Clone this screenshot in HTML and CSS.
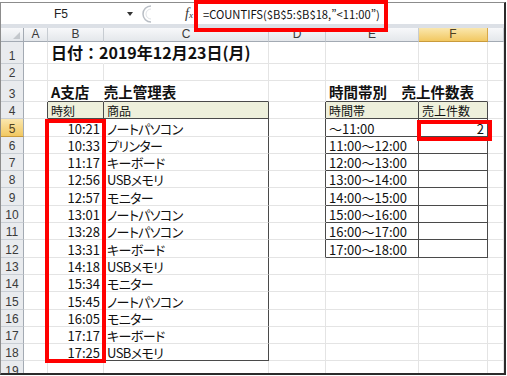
FILE: index.html
```html
<!DOCTYPE html>
<html lang="ja">
<head>
    <meta charset="UTF-8">
    <meta name="viewport" content="width=device-width, initial-scale=1.0">
    <title>A支店 売上管理表</title>
    <link rel="stylesheet" href="styles.css">
</head>
<body>
    <div class="window">
        <!-- Formula bar -->
        <div class="formula-bar">
            <div class="name-box">
                <span class="cell-ref">F5</span>
                <span class="drop"></span>
            </div>
            <svg class="grip" width="10" height="18" viewBox="0 0 10 18">
                <path d="M9 1 A8 8 0 0 0 9 17" fill="none" stroke="#b9bec5" stroke-width="1.5"/>
                <path d="M9 4 A5 5 0 0 0 9 14" fill="none" stroke="#dfe2e6" stroke-width="1"/>
            </svg>
            <span class="fx"><i>f</i><span class="fx-x">x</span></span>
            <div class="formula">=COUNTIFS($B$5:$B$18,”&lt;11:00”)</div>
        </div>

        <!-- Sheet -->
        <table class="sheet">
            <colgroup>
                <col class="c-rh"><col class="c-a"><col class="c-b"><col class="c-c">
                <col class="c-d"><col class="c-e"><col class="c-f"><col class="c-g">
            </colgroup>
            <tr class="r-head">
                <th class="corner"><span class="corner-tri"></span></th>
                <th class="ch">A</th><th class="ch">B</th><th class="ch">C</th>
                <th class="ch">D</th><th class="ch">E</th><th class="ch sel">F</th><th class="ch"></th>
            </tr>
            <tr class="r-title">
                <th class="rh">1</th><td></td>
                <td class="nr title">日付：2019年12月23日(月)</td>
                <td></td><td></td><td></td><td></td><td></td>
            </tr>
            <tr class="r-2">
                <th class="rh">2</th><td></td><td></td><td></td><td></td><td></td><td></td><td></td>
            </tr>
            <tr class="r-3">
                <th class="rh">3</th><td></td>
                <td class="nr bb caption">A支店　売上管理表</td>
                <td class="bb"></td><td></td>
                <td class="nr bb caption">時間帯別　売上件数表</td>
                <td class="bb"></td><td></td>
            </tr>
            <tr class="r-row">
                <th class="rh">4</th><td class="br"></td>
                <td class="head br bb">時刻</td><td class="head br bb">商品</td>
                <td class="br"></td>
                <td class="head br bb">時間帯</td><td class="head br bb">売上件数</td><td></td>
            </tr>
            <tr class="r-row">
                <th class="rh sel">5</th><td class="br"></td>
                <td class="num">10:21</td><td class="item br">ノートパソコン</td><td class="br"></td>
                <td class="br bb">～11:00</td><td class="num br bb">2</td><td></td>
            </tr>
            <tr class="r-row">
                <th class="rh">6</th><td class="br"></td>
                <td class="num">10:33</td><td class="item br">プリンター</td><td class="br"></td>
                <td class="br bb">11:00～12:00</td><td class="br bb"></td><td></td>
            </tr>
            <tr class="r-row">
                <th class="rh">7</th><td class="br"></td>
                <td class="num">11:17</td><td class="item br">キーボード</td><td class="br"></td>
                <td class="br bb">12:00～13:00</td><td class="br bb"></td><td></td>
            </tr>
            <tr class="r-row">
                <th class="rh">8</th><td class="br"></td>
                <td class="num">12:56</td><td class="item br">USBメモリ</td><td class="br"></td>
                <td class="br bb">13:00～14:00</td><td class="br bb"></td><td></td>
            </tr>
            <tr class="r-row">
                <th class="rh">9</th><td class="br"></td>
                <td class="num">12:57</td><td class="item br">モニター</td><td class="br"></td>
                <td class="br bb">14:00～15:00</td><td class="br bb"></td><td></td>
            </tr>
            <tr class="r-row">
                <th class="rh">10</th><td class="br"></td>
                <td class="num">13:01</td><td class="item br">ノートパソコン</td><td class="br"></td>
                <td class="br bb">15:00～16:00</td><td class="br bb"></td><td></td>
            </tr>
            <tr class="r-row">
                <th class="rh">11</th><td class="br"></td>
                <td class="num">13:28</td><td class="item br">ノートパソコン</td><td class="br"></td>
                <td class="br bb">16:00～17:00</td><td class="br bb"></td><td></td>
            </tr>
            <tr class="r-row">
                <th class="rh">12</th><td class="br"></td>
                <td class="num">13:31</td><td class="item br">キーボード</td><td class="br"></td>
                <td class="br bb">17:00～18:00</td><td class="br bb"></td><td></td>
            </tr>
            <tr class="r-row">
                <th class="rh">13</th><td class="br"></td>
                <td class="num">14:18</td><td class="item br">USBメモリ</td>
                <td></td><td></td><td></td><td></td>
            </tr>
            <tr class="r-row">
                <th class="rh">14</th><td class="br"></td>
                <td class="num">15:34</td><td class="item br">モニター</td>
                <td></td><td></td><td></td><td></td>
            </tr>
            <tr class="r-row">
                <th class="rh">15</th><td class="br"></td>
                <td class="num">15:45</td><td class="item br">ノートパソコン</td>
                <td></td><td></td><td></td><td></td>
            </tr>
            <tr class="r-row">
                <th class="rh">16</th><td class="br"></td>
                <td class="num">16:05</td><td class="item br">モニター</td>
                <td></td><td></td><td></td><td></td>
            </tr>
            <tr class="r-row">
                <th class="rh">17</th><td class="br"></td>
                <td class="num">17:17</td><td class="item br">キーボード</td>
                <td></td><td></td><td></td><td></td>
            </tr>
            <tr class="r-row">
                <th class="rh">18</th><td class="br"></td>
                <td class="num bb">17:25</td><td class="item br bb">USBメモリ</td>
                <td></td><td></td><td></td><td></td>
            </tr>
            <tr class="r-row">
                <th class="rh">19</th><td></td><td></td><td></td><td></td><td></td><td></td><td></td>
            </tr>
        </table>
    </div>

    <!-- Red highlight frames drawn over the sheet -->
    <div class="mark mark-formula"></div>
    <div class="mark mark-times"></div>
    <div class="mark mark-count"></div>
</body>
</html>
```

FILE: styles.css
```css
body {
    margin: 0;
    background-color: #fff;
    font-family: "Noto Sans CJK JP", "Liberation Sans", sans-serif;
    color: #111;
    position: relative;
    height: 376px;
    overflow: hidden;
}
.window {
    margin-top: 2px;
    width: 503px;
    height: 370px;
    border-left: 1px solid #8c8c8c;
    border-top: 1px solid #8c8c8c;
    border-right: 2px solid #2b2b2b;
    border-bottom: 2px solid #2b2b2b;
    overflow: hidden;
}

/* formula bar */
.formula-bar {
    display: flex;
    align-items: center;
    height: 21px;
    border-bottom: 4px solid #dce0e6;
    background-color: #fff;
}
.name-box {
    display: flex;
    align-items: center;
    width: 140px;
    flex: none;
}
.cell-ref {
    width: 120px;
    text-align: center;
    font-family: "Liberation Sans", sans-serif;
    font-size: 12px;
    color: #222;
}
.drop {
    margin-left: 6px;
    border-top: 4px solid #333;
    border-left: 3px solid transparent;
    border-right: 3px solid transparent;
}
.grip {
    flex: none;
    margin-left: 1px;
}
.fx {
    flex: none;
    margin-left: 33px;
    width: 18px;
    font-family: "Liberation Serif", serif;
    font-size: 14px;
    color: #333;
}
.fx-x {
    font-size: 9px;
    font-style: italic;
}
.formula {
    font-size: 11.2px;
    color: #111;
    white-space: nowrap;
}

/* sheet grid */
.sheet {
    border-collapse: separate;
    border-spacing: 0;
    table-layout: fixed;
    width: 503px;
}
.c-rh { width: 23px; }
.c-a { width: 24px; }
.c-b { width: 56px; }
.c-c { width: 165px; }
.c-d { width: 57px; }
.c-e { width: 93px; }
.c-f { width: 69px; }
.c-g { width: 16px; }

.r-head { height: 14px; }
.r-title { height: 22px; }
.r-2 { height: 17px; }
.r-3 { height: 21px; }
.r-row { height: 17.3px; }

.sheet td {
    padding: 0 3px;
    border-right: 1px solid #e4e4e4;
    border-bottom: 1px solid #e4e4e4;
    vertical-align: bottom;
    font-size: 13px;
    line-height: 15px;
    white-space: nowrap;
    overflow: visible;
}
.sheet th {
    padding: 0;
    font-family: "Liberation Sans", sans-serif;
    font-weight: normal;
    font-size: 12px;
    color: #3a3a3a;
}
.ch {
    text-align: center;
    line-height: 13px;
    background: linear-gradient(#f7f8fa, #e4e7eb);
    border-right: 1px solid #c7ccd2;
    border-bottom: 1px solid #a3aab3;
}
.ch.sel {
    background: linear-gradient(#fae7ae, #f2c861);
    border-right: 1px solid #d8a848;
    border-bottom: 1px solid #c99b3c;
    color: #4e4020;
}
.corner {
    position: relative;
    background: linear-gradient(#f7f8fa, #e4e7eb);
    border-right: 1px solid #a3aab3;
    border-bottom: 1px solid #a3aab3;
}
.corner-tri {
    position: absolute;
    right: 3px;
    bottom: 2px;
    border-bottom: 7px solid #c3c7cc;
    border-left: 7px solid transparent;
}
.rh {
    text-align: center;
    vertical-align: bottom;
    line-height: 14px;
    background-color: #e9ebee;
    border-right: 1px solid #a3aab3;
    border-bottom: 1px solid #c9ced4;
}
.rh.sel {
    background: linear-gradient(#fae7ae, #f2c861);
    border-bottom: 1px solid #c99b3c;
    color: #4e4020;
}

/* cell formats */
.sheet td.br { border-right-color: #4a4a4a; }
.sheet td.bb { border-bottom-color: #4a4a4a; }
.sheet td.nr { border-right-color: transparent; }
.sheet td.head {
    background-color: #eef0dc;
    font-size: 12px;
}
.sheet td.num { text-align: right; }
.sheet td.item {
    font-feature-settings: "palt";
    font-size: 13px;
    letter-spacing: -0.6px;
}
.sheet td.title {
    font-size: 16px;
    font-weight: bold;
    line-height: 20px;
    padding-bottom: 1px;
}
.sheet td.caption {
    font-size: 14.5px;
    font-weight: bold;
    line-height: 18px;
}

/* red frames */
.mark {
    position: absolute;
    border: 4px solid #f00;
    box-sizing: border-box;
}
.mark-formula {
    left: 194px;
    top: 0;
    width: 194px;
    height: 32px;
}
.mark-times {
    left: 45px;
    top: 119px;
    width: 61px;
    height: 244px;
}
.mark-count {
    left: 417px;
    top: 120px;
    width: 75px;
    height: 21px;
}
```
